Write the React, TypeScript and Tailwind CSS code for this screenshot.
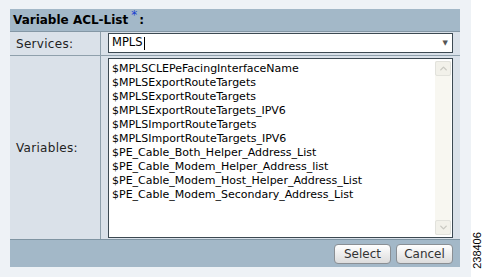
import { ChevronDown, ChevronUp } from 'lucide-react';

const variables = [
  '$MPLSCLEPeFacingInterfaceName',
  '$MPLSExportRouteTargets',
  '$MPLSExportRouteTargets',
  '$MPLSExportRouteTargets_IPV6',
  '$MPLSImportRouteTargets',
  '$MPLSImportRouteTargets_IPV6',
  '$PE_Cable_Both_Helper_Address_List',
  '$PE_Cable_Modem_Helper_Address_list',
  '$PE_Cable_Modem_Host_Helper_Address_List',
  '$PE_Cable_Modem_Secondary_Address_List',
];

const font = { fontFamily: '"DejaVu Sans", Tahoma, sans-serif' };

export default function App() {
  return (
    <div className="flex w-[494px] h-[277px] bg-white overflow-hidden" style={font}>
      <div className="w-[471px] h-full bg-[#eef2f6] pt-[9px] pl-[10px]">
        <div className="w-[450px] flex flex-col">
          {/* header */}
          <div className="h-[23px] bg-[#a3b8c8] border-b border-[#8497a5] flex items-center pl-[3px] text-[12px] font-bold text-black">
            Variable ACL-List
            <span className="relative -top-[5px] ml-[3px] text-[#1b3fd0] font-normal text-[12px]">*</span>
            <span className="ml-[2px]">:</span>
          </div>

          {/* services row */}
          <div className="h-[24px] flex border-b border-[#8fa0ac] bg-[#dae1e9]">
            <div className="w-[91px] border-r border-[#8fa0ac] flex items-center pl-[6px] text-[12px] text-[#222] tracking-[0.3px]">
              Services:
            </div>
            <div className="flex-1 pl-[7px] pr-[7px] pt-[1px]">
              <div className="h-[20px] bg-white border border-[#3c4952] flex items-center pl-[3px] pr-[4px] text-[11.5px] text-black">
                <span>MPLS</span>
                <span className="w-px h-[13px] bg-black ml-px" />
                <span className="ml-auto text-[7px] text-[#555]">▼</span>
              </div>
            </div>
          </div>

          {/* variables row */}
          <div className="h-[184px] flex border-b border-[#7f94a2] bg-[#dae1e9]">
            <div className="w-[91px] border-r border-[#8fa0ac] flex items-center pl-[6px] text-[12px] text-[#222] tracking-[0.3px]">
              Variables:
            </div>
            <div className="flex-1 pl-[7px] pr-[7px] pt-[2px]">
              <div className="h-[180px] bg-white border border-[#3c4952] flex">
                <div className="flex-1 pl-[3px] pt-[3px] text-[11px] leading-[14px] text-black">
                  {variables.map((v, i) => (
                    <div key={i} className="whitespace-nowrap">{v}</div>
                  ))}
                </div>
                <div className="w-[16px] mt-[2px] mb-[2px] mr-[1px] bg-[#f8f7f1] flex flex-col justify-between">
                  <div className="h-[15px] border border-[#e2e2dc] rounded-[2px] bg-[#f2f1ea] flex items-center justify-center">
                    <ChevronUp size={11} strokeWidth={3} className="text-[#c9c9c2]" />
                  </div>
                  <div className="h-[15px] border border-[#e2e2dc] rounded-[2px] bg-[#f2f1ea] flex items-center justify-center">
                    <ChevronDown size={11} strokeWidth={3} className="text-[#c9c9c2]" />
                  </div>
                </div>
              </div>
            </div>
          </div>

          {/* footer */}
          <div className="h-[27px] bg-[#a3b8c8] flex items-center justify-end gap-[5px] pr-[7px]">
            <button className="w-[57px] h-[20px] rounded-[4px] border border-[#8a8f94] bg-gradient-to-b from-white to-[#dcdcdc] text-[12px] text-[#333]">
              Select
            </button>
            <button className="w-[57px] h-[20px] rounded-[4px] border border-[#8a8f94] bg-gradient-to-b from-white to-[#dcdcdc] text-[12px] text-[#333]">
              Cancel
            </button>
          </div>
        </div>
      </div>
      <div className="flex-1 relative">
        <span
          className="absolute left-[-12px] top-[244px] -rotate-90 text-[11px] leading-[13px] text-black whitespace-nowrap"
          style={{ fontFamily: '"Liberation Sans", Arial, sans-serif' }}
        >
          238406
        </span>
      </div>
    </div>
  );
}
